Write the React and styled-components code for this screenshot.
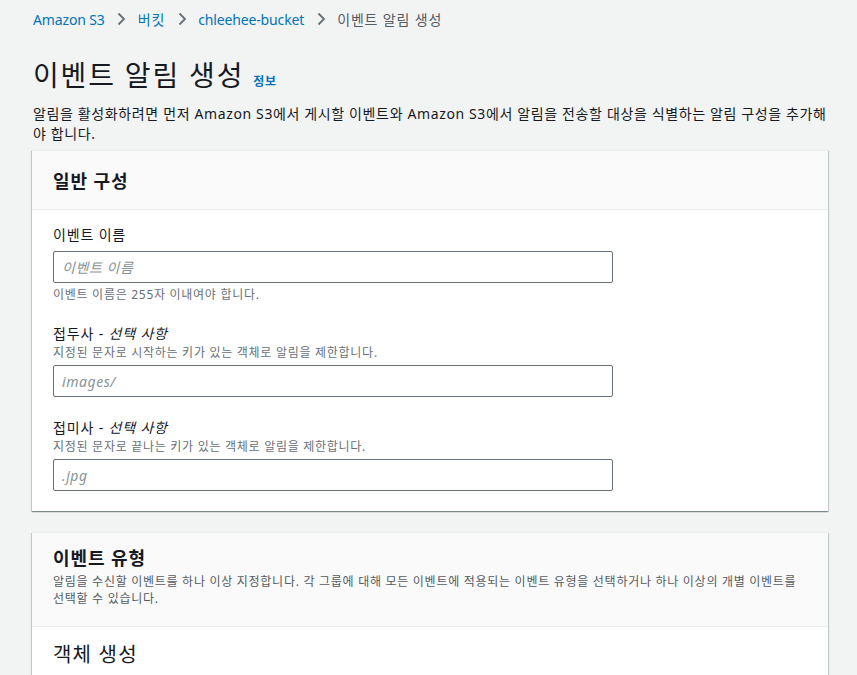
import React from "react";
import styled, { createGlobalStyle } from "styled-components";

const Global = createGlobalStyle`
  html, body { margin: 0; padding: 0; background: #f2f3f3; }
  body {
    font-family: "Noto Sans", "Noto Sans CJK KR", sans-serif;
    color: #16191f;
  }
  * { box-sizing: border-box; }
`;

const Page = styled.div`
  padding: 8px 29px 0 32px;
  min-height: 675px;
  overflow: hidden;
`;

const Crumbs = styled.nav`
  display: flex;
  align-items: center;
  height: 22px;
  padding-left: 1px;
  font-size: 14px;
`;

const Crumb = styled.span`
  color: ${(p) => (p.$current ? "#545b64" : "#0073bb")};
  letter-spacing: ${(p) => (p.$ko ? "0.06em" : "-0.01em")};
`;

const Sep = styled.span`
  display: inline-flex;
  width: 33px;
  justify-content: center;
`;

const TitleRow = styled.div`
  display: flex;
  align-items: baseline;
  gap: 9px;
  margin-top: 27px;
  padding-left: 1px;
`;

const Title = styled.h1`
  margin: 0;
  font-size: 28px;
  font-weight: 400;
  line-height: 36px;
  letter-spacing: 0.065em;
  color: #16191f;
`;

const Info = styled.a`
  font-size: 12px;
  font-weight: 700;
  letter-spacing: 0.06em;
  color: #0073bb;
`;

const Desc = styled.p`
  margin: 11px 0 0;
  padding-left: 1px;
  font-size: 14px;
  line-height: 20px;
  letter-spacing: 0.045em;
`;

const Card = styled.section`
  background: #fff;
  margin-top: ${(p) => p.$top}px;
  border-top: 1px solid #eaeded;
  box-shadow: 0 1px 1px 0 rgba(0, 28, 36, 0.3), 1px 1px 1px 0 rgba(0, 28, 36, 0.15),
    -1px 1px 1px 0 rgba(0, 28, 36, 0.15);
`;

const CardHeader = styled.header`
  background: #fafafa;
  border-bottom: 1px solid #eaeded;
  padding: ${(p) => p.$pad};
`;

const CardTitle = styled.h2`
  margin: 0;
  font-size: 18px;
  font-weight: 700;
  line-height: 24px;
  letter-spacing: 0.05em;
`;

const CardDesc = styled.p`
  margin: 3px 0 0;
  font-size: 12px;
  line-height: 17px;
  letter-spacing: 0.06em;
  color: #545b64;
`;

const CardBody = styled.div`
  padding: ${(p) => p.$pad || "15px 20px 20px 21px"};
`;

const Field = styled.div`
  display: flex;
  flex-direction: column;
  width: 560px;
  margin-top: ${(p) => p.$top || 0}px;
`;

const Label = styled.label`
  font-size: 14px;
  line-height: 20px;
  letter-spacing: 0.06em;
  color: #16191f;
  i { font-style: italic; }
`;

const Hint = styled.div`
  font-size: 12px;
  line-height: 17px;
  letter-spacing: 0.06em;
  color: #687078;
`;

const Input = styled.input`
  height: 32px;
  width: 100%;
  margin: ${(p) => p.$m};
  border: 1px solid #687078;
  border-radius: 2px;
  padding: 4px 8px;
  font-family: inherit;
  font-size: 14px;
  letter-spacing: 0.04em;
  background: #fff;
  &::placeholder {
    color: #879596;
    font-style: italic;
  }
`;

const SubTitle = styled.h3`
  margin: 0;
  font-size: 20px;
  font-weight: 400;
  line-height: 26px;
  letter-spacing: 0.06em;
  color: #16191f;
`;

const Chevron = () => (
  <svg width="10" height="14" viewBox="0 0 10 14">
    <path d="M2.5 1.5 L8 7 L2.5 12.5" fill="none" stroke="#687078" strokeWidth="1.8" />
  </svg>
);

export default function App() {
  return (
    <Page>
      <Global />
      <Crumbs>
        <Crumb>Amazon S3</Crumb>
        <Sep><Chevron /></Sep>
        <Crumb $ko>버킷</Crumb>
        <Sep><Chevron /></Sep>
        <Crumb>chleehee-bucket</Crumb>
        <Sep><Chevron /></Sep>
        <Crumb $current $ko>이벤트 알림 생성</Crumb>
      </Crumbs>
      <TitleRow>
        <Title>이벤트 알림 생성</Title>
        <Info>정보</Info>
      </TitleRow>
      <Desc>
        알림을 활성화하려면 먼저 Amazon S3에서 게시할 이벤트와 Amazon S3에서 알림을 전송할 대상을 식별하는 알림 구성을 추가해야 합니다.
      </Desc>
      <Card $top={6}>
        <CardHeader $pad="18px 20px 16px 21px">
          <CardTitle>일반 구성</CardTitle>
        </CardHeader>
        <CardBody>
          <Field>
            <Label>이벤트 이름</Label>
            <Input $m="6px 0 3px" placeholder="이벤트 이름" />
            <Hint>이벤트 이름은 255자 이내여야 합니다.</Hint>
          </Field>
          <Field $top={21}>
            <Label>접두사 - <i>선택 사항</i></Label>
            <Hint>지정된 문자로 시작하는 키가 있는 객체로 알림을 제한합니다.</Hint>
            <Input $m="4px 0 0" placeholder="images/" />
          </Field>
          <Field $top={21}>
            <Label>접미사 - <i>선택 사항</i></Label>
            <Hint>지정된 문자로 끝나는 키가 있는 객체로 알림을 제한합니다.</Hint>
            <Input $m="4px 0 0" placeholder=".jpg" />
          </Field>
        </CardBody>
      </Card>
      <Card $top={21}>
        <CardHeader $pad="13px 20px 19px 21px">
          <CardTitle>이벤트 유형</CardTitle>
          <CardDesc>
            알림을 수신할 이벤트를 하나 이상 지정합니다. 각 그룹에 대해 모든 이벤트에 적용되는 이벤트 유형을 선택하거나 하나 이상의 개별 이벤트를 선택할 수 있습니다.
          </CardDesc>
        </CardHeader>
        <CardBody $pad="15px 20px 20px 21px">
          <SubTitle>객체 생성</SubTitle>
        </CardBody>
      </Card>
    </Page>
  );
}
